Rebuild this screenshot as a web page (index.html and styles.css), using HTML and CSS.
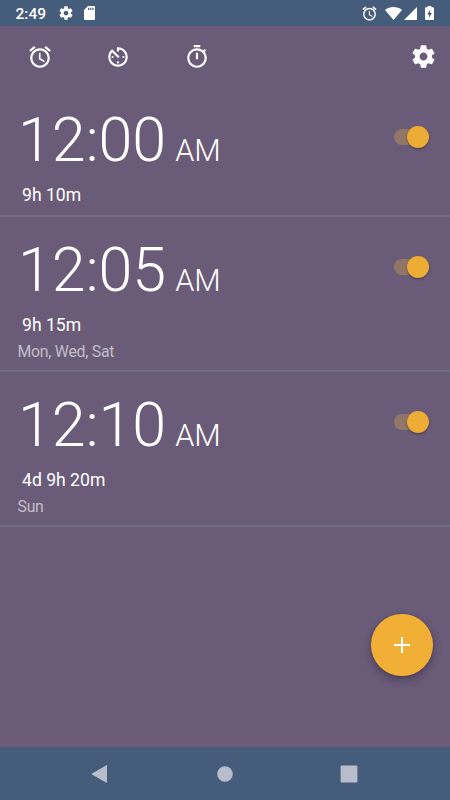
FILE: index.html
```html
<!DOCTYPE html>
<html lang="en">
<head>
<meta charset="utf-8">
<title>Alarms</title>
<link rel="stylesheet" href="styles.css">
</head>
<body>
<svg class="defs" aria-hidden="true">
  <symbol id="alarm" viewBox="0 0 24 24"><path d="M22 5.72l-4.6-3.86-1.29 1.53 4.6 3.86L22 5.72zM7.88 3.39L6.6 1.86 2 5.71l1.29 1.53 4.59-3.85zM12.5 8H11v6l4.75 2.85.75-1.23-4-2.37V8zM12 4c-4.97 0-9 4.03-9 9s4.02 9 9 9c4.97 0 9-4.03 9-9s-4.03-9-9-9zm0 16c-3.87 0-7-3.13-7-7s3.13-7 7-7 7 3.13 7 7-3.13 7-7 7z"/></symbol>
  <symbol id="avtimer" viewBox="0 0 24 24"><path d="M11 17c0 .55.45 1 1 1s1-.45 1-1-.45-1-1-1-1 .45-1 1zm0-14v4h2V5.08c3.39.49 6 3.39 6 6.92 0 3.87-3.13 7-7 7s-7-3.13-7-7c0-1.68.59-3.22 1.58-4.42L12 13l1.41-1.41-6.8-6.8v.02C4.42 6.45 3 9.05 3 12c0 4.97 4.02 9 9 9 4.97 0 9-4.03 9-9s-4.03-9-9-9h-1zm7 9c0-.55-.45-1-1-1s-1 .45-1 1 .45 1 1 1 1-.45 1-1zM6 12c0 .55.45 1 1 1s1-.45 1-1-.45-1-1-1-1 .45-1 1z"/></symbol>
  <symbol id="timer" viewBox="0 0 24 24"><path d="M15 1H9v2h6V1zm-4 13h2V8h-2v6zm8.03-6.61l1.42-1.42c-.43-.51-.9-.99-1.41-1.41l-1.42 1.42C16.07 4.74 14.12 4 12 4c-4.97 0-9 4.03-9 9s4.02 9 9 9 9-4.03 9-9c0-2.12-.74-4.07-1.97-5.61zM12 20c-3.87 0-7-3.13-7-7s3.13-7 7-7 7 3.13 7 7-3.13 7-7 7z"/></symbol>
  <symbol id="gear" viewBox="0 0 24 24"><path d="M19.43 12.98c.04-.32.07-.64.07-.98s-.03-.66-.07-.98l2.11-1.65c.19-.15.24-.42.12-.64l-2-3.46c-.12-.22-.39-.3-.61-.22l-2.49 1c-.52-.4-1.08-.73-1.69-.98l-.38-2.65C14.46 2.18 14.25 2 14 2h-4c-.25 0-.46.18-.49.42l-.38 2.65c-.61.25-1.17.59-1.69.98l-2.49-1c-.23-.09-.49 0-.61.22l-2 3.46c-.13.22-.07.49.12.64l2.11 1.65c-.04.32-.07.65-.07.98s.03.66.07.98l-2.11 1.65c-.19.15-.24.42-.12.64l2 3.46c.12.22.39.3.61.22l2.49-1c.52.4 1.08.73 1.69.98l.38 2.65c.03.24.24.42.49.42h4c.25 0 .46-.18.49-.42l.38-2.65c.61-.25 1.17-.59 1.69-.98l2.49 1c.23.09.49 0 .61-.22l2-3.46c.12-.22.07-.49-.12-.64l-2.11-1.65zM12 15.5c-1.93 0-3.5-1.57-3.5-3.5s1.57-3.5 3.5-3.5 3.5 1.57 3.5 3.5-1.57 3.5-3.5 3.5z"/></symbol>
</svg>

<header class="status">
  <span class="clock">2:49</span>
  <svg class="s-gear"><use href="#gear"/></svg>
  <svg class="s-card" viewBox="0 0 11 14"><path fill-rule="evenodd" d="M4 0h6q1 0 1 1v12q0 1-1 1H1q-1 0-1-1V4zM4 1.7v2.3h1.2V1.7zM6.2 1.7v2.3h1.2V1.7zM8.4 1.7v2.3h1.2V1.7z"/></svg>
  <svg class="s-alarm"><use href="#alarm"/></svg>
  <svg class="s-wifi" viewBox="0 0 17 13"><path d="M0 2.9C5 -.9 12 -.9 17 2.9L8.5 13z"/></svg>
  <svg class="s-signal" viewBox="0 0 13 13"><path d="M13 0v13H0z"/></svg>
  <svg class="s-battery" viewBox="0 0 9 14"><path fill-rule="evenodd" d="M2.6 0h3.8v1.3H8q1 0 1 1V13q0 1-1 1H1q-1 0-1-1V2.300q0-1 1-1h1.600zM5.200 3.700L2.200 8.400h1.900v3.300L6.900 7H5.200z"/></svg>
</header>

<nav class="tabs">
  <svg class="tab"><use href="#alarm"/></svg>
  <svg class="tab"><use href="#avtimer"/></svg>
  <svg class="tab"><use href="#timer"/></svg>
  <svg class="settings"><use href="#gear"/></svg>
</nav>

<main class="list">
  <section class="alarm">
    <div class="info">
      <div class="time">12:00<span class="ampm">AM</span></div>
      <div class="left">9h 10m</div>
    </div>
    <div class="switch"><div class="thumb"></div></div>
  </section>
  <section class="alarm">
    <div class="info">
      <div class="time">12:05<span class="ampm">AM</span></div>
      <div class="left">9h 15m</div>
      <div class="days">Mon, Wed, Sat</div>
    </div>
    <div class="switch"><div class="thumb"></div></div>
  </section>
  <section class="alarm">
    <div class="info">
      <div class="time">12:10<span class="ampm">AM</span></div>
      <div class="left">4d 9h 20m</div>
      <div class="days">Sun</div>
    </div>
    <div class="switch"><div class="thumb"></div></div>
  </section>
</main>

<div class="fab"><svg viewBox="0 0 16 16"><path d="M7 0h2v7h7v2H9v7H7V9H0V7h7z"/></svg></div>

<footer class="navbar">
  <svg viewBox="0 0 18 18"><path d="M16 .6v16.800q0 .6-.6.300L1 9.400q-.5-.4 0-.8L15.400.300q.6-.300.6.3z"/></svg>
  <svg viewBox="0 0 18 18"><circle cx="9" cy="9" r="7.800"/></svg>
  <svg viewBox="0 0 18 18"><rect x=".6" y=".6" width="16.800" height="16.800" rx="1"/></svg>
</footer>
</body>
</html>
```
FILE: styles.css
```css
* { box-sizing: border-box; }
body {
  margin: 0;
  width: 450px;
  height: 800px;
  display: flex;
  flex-direction: column;
  position: relative;
  overflow: hidden;
  background: #6a5c78;
  color: #fff;
  font-family: Roboto, "Liberation Sans", sans-serif;
}
svg { display: block; fill: #fff; flex: none; }
.defs { position: absolute; width: 0; height: 0; }

.status {
  height: 26px;
  flex: none;
  display: flex;
  align-items: center;
  padding: 0 16px 0 15.500px;
  background: #455c7b;
}
.clock { width: 42px; padding-top: 2px; font-size: 15.500px; font-weight: 500; line-height: 26px; }
.s-gear { width: 16px; height: 16px; margin-right: 10.500px; }
.s-card { width: 11px; height: 14px; }
.s-alarm { width: 17px; height: 17px; margin-left: auto; margin-right: 6.500px; }
.s-wifi { width: 17px; height: 13px; margin-right: 2.500px; }
.s-signal { width: 13px; height: 13px; margin-top: 1px; margin-right: 8px; }
.s-battery { width: 9px; height: 14px; }

.tabs {
  height: 61px;
  flex: none;
  display: flex;
  align-items: center;
  padding: 0 13px 0 26.500px;
}
.tab { width: 26px; height: 26px; margin-right: 52.800px; }
.settings { width: 27px; height: 27px; margin-left: auto; }

.list { flex: 1; }
.alarm {
  height: 155px;
  display: flex;
  justify-content: space-between;
  padding: 15px 21px 0 22px;
  border-bottom: 2px solid #736a86;
}
.alarm:first-child { height: 130px; }
.time { height: 80px; margin-left: -4px; line-height: 76px; font-size: 61px; font-weight: 300; white-space: nowrap; }
.ampm { font-size: 30.500px; margin-left: 9px; }
.left { line-height: 26px; font-size: 17.600px; }
.days { margin: 1px 0 0 -4.500px; line-height: 26px; font-size: 15.800px; letter-spacing: -.24px; color: #c3bec9; }

.switch {
  width: 35px;
  height: 16px;
  margin-top: 27px;
  border-radius: 8px;
  background: #927668;
  display: flex;
  align-items: center;
  justify-content: flex-end;
}
.alarm + .alarm .switch { margin-top: 26.500px; }
.thumb {
  width: 22px;
  height: 22px;
  flex: none;
  border-radius: 50%;
  background: #edac34;
  box-shadow: 0 1px 2px rgba(30, 20, 50, .55);
}

.fab {
  position: absolute;
  left: 371px;
  top: 614px;
  width: 61.500px;
  height: 61.500px;
  border-radius: 50%;
  background: #f2af36;
  display: flex;
  align-items: center;
  justify-content: center;
  box-shadow: 0 4px 8px rgba(30, 20, 50, .38), 0 0 2px rgba(30, 20, 50, .3);
}
.fab svg { width: 16px; height: 16px; }

.navbar {
  height: 53px;
  flex: none;
  display: flex;
  align-items: center;
  justify-content: space-between;
  padding: 0 92px 0 91px;
  background: #455c7b;
}
.navbar svg { width: 18px; height: 18px; fill: #b7bdcb; }
```
